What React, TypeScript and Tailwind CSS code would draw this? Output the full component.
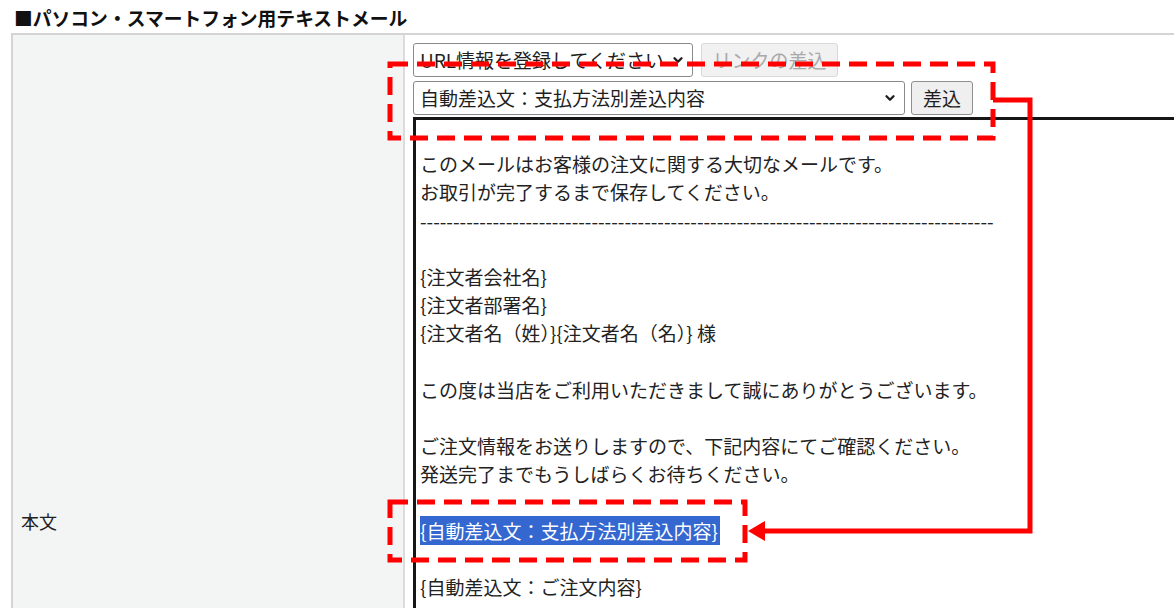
import { ChevronDown } from 'lucide-react'

const jp = { fontFamily: '"Noto Sans CJK JP", "Noto Sans", sans-serif' }

const bodyLines = [
	'',
	'このメールはお客様の注文に関する大切なメールです。',
	'お取引が完了するまで保存してください。',
	'-'.repeat(87),
	'',
	'{注文者会社名}',
	'{注文者部署名}',
	'{注文者名（姓）}{注文者名（名）} 様',
	'',
	'この度は当店をご利用いただきまして誠にありがとうございます。',
	'',
	'ご注文情報をお送りしますので、下記内容にてご確認ください。',
	'発送完了までもうしばらくお待ちください。',
	'',
	'__HIGHLIGHT__',
	'',
	'{自動差込文：ご注文内容}',
]

function FakeSelect({ value, width }: { value: string; width: string }) {
	return (
		<div className={`relative ${width}`}>
			<div className="h-full w-full truncate rounded-[3px] border border-[#8a8a8a] bg-white pl-[6px] pr-[26px] text-[19px] leading-[31px] text-[#1e1e1e]">
				{value}
			</div>
			<ChevronDown
				className="absolute right-[8px] top-1/2 h-[14px] w-[14px] -translate-y-1/2 text-[#1e1e1e]"
				strokeWidth={4}
				aria-hidden="true"
			/>
		</div>
	)
}

export default function App() {
	return (
		<div className="relative h-[608px] w-[1174px] overflow-hidden bg-white" style={jp}>
			{/* section title */}
			<div className="pl-[14px] pt-[5px] text-[18.8px] font-bold leading-[26px] text-[#111]">
				■パソコン・スマートフォン用テキストメール
			</div>

			<div className="ml-[11px] mt-[2px] flex border-l-2 border-t-2 border-[#d4d4d4]">
				<div className="w-[392px] shrink-0 border-r-2 border-[#dcdcdc] bg-[#f3f4f4] pl-[8px] pt-[472px] text-[18px] leading-[28px] text-[#222]">
					本文
				</div>

				<div className="flex-1 pl-[8px] pt-[8px]">
					<div className="flex h-[34px] items-stretch gap-[8px]">
						<FakeSelect value="URL情報を登録してください" width="w-[280px]" />
						<button
							type="button"
							disabled
							className="w-[137px] rounded-[3px] border border-[#d9d9d9] bg-[#f1f1f1] text-[19px] text-[#a9a9a9]"
						>
							リンクの差込
						</button>
					</div>
					<div className="mt-[4px] flex h-[34px] items-stretch gap-[6px]">
						<FakeSelect value="自動差込文：支払方法別差込内容" width="w-[492px]" />
						<button
							type="button"
							className="w-[62px] rounded-[3px] border border-[#8f8f8f] bg-[#efefef] text-[19px] text-[#1e1e1e]"
						>
							差込
						</button>
					</div>

					{/* mail body (textarea look) */}
					<div className="mt-[2px] h-[600px] w-[800px] border-[3px] border-[#161616] pl-[4px] pt-[2px] text-[19px] leading-[28.2px] text-[#222]">
						{bodyLines.map((line, i) =>
							line === '__HIGHLIGHT__' ? (
								<div key={i} className="h-[28.2px] whitespace-pre">
									<span className="bg-[#3467d0] py-[1px] pr-[2px] text-white">{'{自動差込文：支払方法別差込内容}'}</span>
								</div>
							) : (
								<div key={i} className="h-[28.2px] overflow-hidden whitespace-pre">
									{line}
								</div>
							),
						)}
					</div>
				</div>
			</div>

			{/* red annotations */}
			<svg className="pointer-events-none absolute left-0 top-0" width="1174" height="608" aria-hidden="true">
				<g fill="none" stroke="#ff0000" strokeWidth="5" strokeDasharray="18 9">
					<rect x="390" y="64" width="603" height="74" />
					<rect x="390" y="502" width="355" height="58" />
				</g>
				<path d="M993 100 H1030 V531 H762" fill="none" stroke="#ff0000" strokeWidth="5" />
				<polygon points="748,531 765,521 765,541" fill="#ff0000" />
			</svg>
		</div>
	)
}
